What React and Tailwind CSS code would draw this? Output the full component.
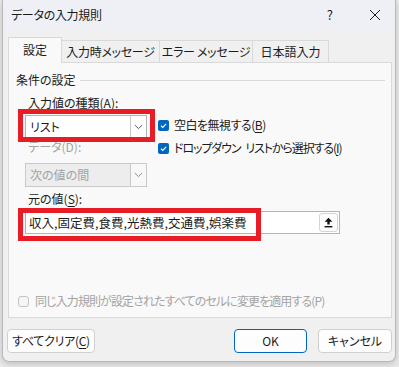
import React from "react";

const U = ({ children }) => (
  <span className="underline underline-offset-[2px] decoration-[1px]">{children}</span>
);

function CheckOn() {
  return (
    <span className="w-[11px] h-[11px] rounded-[2px] bg-[#0067c0] flex items-center justify-center shrink-0">
      <svg width="9" height="9" viewBox="0 0 10 10">
        <path d="M2.2 5.3 L4.2 7.1 L7.9 3.2" stroke="white" strokeWidth="1.3" fill="none" />
      </svg>
    </span>
  );
}

function Chevron({ color = "#5c5c5c" }) {
  return (
    <svg width="9" height="6" viewBox="0 0 9 6">
      <path d="M0.8 1 L4.5 4.6 L8.2 1" stroke={color} strokeWidth="1" fill="none" />
    </svg>
  );
}

export default function App() {
  return (
    <div className="w-[399px] h-[367px] bg-[#e9e9e9] font-['Noto_Sans_CJK_JP',sans-serif] [font-feature-settings:'palt'] text-[12px] text-[#1b1b1b] leading-[16px] overflow-hidden">
      <div className="ml-[2px] w-[394px] h-[362px] bg-[#f0f0f0] border border-t-0 border-[#b9b9b9] rounded-b-[7px] shadow-[0_2px_6px_rgba(0,0,0,0.18)] flex flex-col">
        {/* title bar */}
        <div className="h-[30px] bg-[#eff0f5] flex items-center pl-[8px]">
          <span className="text-[12px] tracking-[-0.3px]">データの入力規則</span>
          <span className="ml-auto mr-[32px] text-[13px]">?</span>
          <span className="mr-[10px] w-[20px] flex justify-center">
            <svg width="12" height="12" viewBox="0 0 12 12">
              <path d="M1 1 L11 11 M11 1 L1 11" stroke="#1b1b1b" strokeWidth="1" />
            </svg>
          </span>
        </div>

        {/* tabs */}
        <div className="flex items-end ml-[5px] mt-[7px] h-[25px]">
          <div className="w-[54px] h-[26px] bg-[#f9f9f9] border border-b-0 border-[#d9d9d9] flex items-center justify-center relative z-10 -mb-px">
            <span className="pb-[1px]">設定</span>
          </div>
          <div className="w-[98px] h-[22px] bg-[#f0f0f0] border border-l-0 border-b-0 border-[#d9d9d9] flex items-center justify-center tracking-[-0.3px]">
            入力時メッセージ
          </div>
          <div className="w-[93px] h-[22px] bg-[#f0f0f0] border border-l-0 border-b-0 border-[#d9d9d9] flex items-center justify-center tracking-[-0.3px]">
            エラー メッセージ
          </div>
          <div className="w-[76px] h-[22px] bg-[#f0f0f0] border border-l-0 border-b-0 border-[#d9d9d9] flex items-center justify-center">
            日本語入力
          </div>
        </div>

        {/* panel */}
        <div className="ml-[5px] w-[384px] h-[256px] bg-[#f9f9f9] border border-[#d9d9d9] flex flex-col">
          <div className="flex items-center pt-[9px] pl-[7px] pr-[6px]">
            <span>条件の設定</span>
            <div className="flex-1 h-px bg-[#d9d9d9] ml-[4px]" />
          </div>

          <div className="flex pl-[16px] mt-[7px]">
            <div className="w-[122px] flex flex-col relative">
              <span className="pl-[3px]">入力値の種類(A):</span>
              <div className="mt-[4px] h-[23px] bg-white border border-[#b3b3b3] flex">
                <span className="flex-1 flex items-center pl-[4px]">リスト</span>
                <span className="w-[16px] border-l border-[#c8c8c8] flex items-center justify-center">
                  <Chevron />
                </span>
              </div>
              <span className="pl-[3px] mt-[1px] text-[#a3a3a3]">データ(D):</span>
              <div className="mt-[8px] h-[24px] bg-[#ededed] border border-[#c9c9c9] flex text-[#a3a3a3]">
                <span className="flex-1 flex items-center pl-[4px]">次の値の間</span>
                <span className="w-[16px] bg-[#f8f8f8] border-l border-[#c9c9c9] flex items-center justify-center">
                  <Chevron color="#8c8c8c" />
                </span>
              </div>
              {/* red annotation */}
              <div className="absolute left-[-7px] top-[14px] w-[137px] h-[33px] border-[5px] border-[#e81c24]" />
            </div>
            <div className="ml-[11px] pt-[22px] flex flex-col gap-[7px]">
              <div className="flex items-center gap-[5px] h-[16px]">
                <CheckOn />
                <span className="tracking-[-0.5px]">
                  空白を無視する(<U>B</U>)
                </span>
              </div>
              <div className="flex items-center gap-[5px] h-[16px]">
                <CheckOn />
                <span className="tracking-[-1.1px]">
                  ドロップダウン<span className="ml-[5px]">リストから選択する(<U>I</U>)</span>
                </span>
              </div>
            </div>
          </div>

          <div className="pl-[19px] mt-[4px]">
            元の値(<U>S</U>):
          </div>
          <div className="ml-[16px] mt-[4px] w-[315px] h-[23px] bg-white border border-[#b3b3b3] flex items-center relative">
            <span className="pl-[3px] text-[12.5px]">収入,固定費,食費,光熱費,交通費,娯楽費</span>
            <div className="ml-auto mr-[1px] w-[19px] h-[19px] rounded-[3px] border border-[#d4d4d4] bg-[#fdfdfd] flex items-center justify-center">
              <svg width="9" height="11" viewBox="0 0 9 11">
                <path d="M4.5 0.8 L8.4 4.8 L5.7 4.8 L5.7 7.6 L3.3 7.6 L3.3 4.8 L0.6 4.8 Z" fill="#111" />
                <rect x="0.6" y="9" width="7.8" height="1.4" fill="#111" />
              </svg>
            </div>
            <div className="absolute left-[-8px] top-[-4px] w-[243px] h-[33px] border-[5px] border-[#e81c24]" />
          </div>

          <div className="flex items-center pl-[9px] mt-[59px] text-[#a3a3a3] gap-[6px]">
            <span className="w-[11px] h-[11px] rounded-[3px] border border-[#c4c4c4] bg-[#f5f5f5]" />
            <span className="tracking-[-0.9px]">同じ入力規則が設定されたすべてのセルに変更を適用する(P)</span>
          </div>
        </div>

        {/* buttons */}
        <div className="flex mt-[11px] ml-[4px]">
          <button className="w-[88px] h-[24px] bg-[#fdfdfd] border border-[#d0d0d0] rounded-[4px] text-[12px] tracking-[-0.3px]">
            すべてクリア(<U>C</U>)
          </button>
          <button className="ml-auto w-[73px] h-[24px] bg-[#fdfdfd] border border-[#0067c0] rounded-[4px] text-[12px]">
            OK
          </button>
          <button className="ml-[11px] mr-[3px] w-[74px] h-[24px] bg-[#fdfdfd] border border-[#d0d0d0] rounded-[4px] text-[12px]">
            キャンセル
          </button>
        </div>
      </div>
    </div>
  );
}
